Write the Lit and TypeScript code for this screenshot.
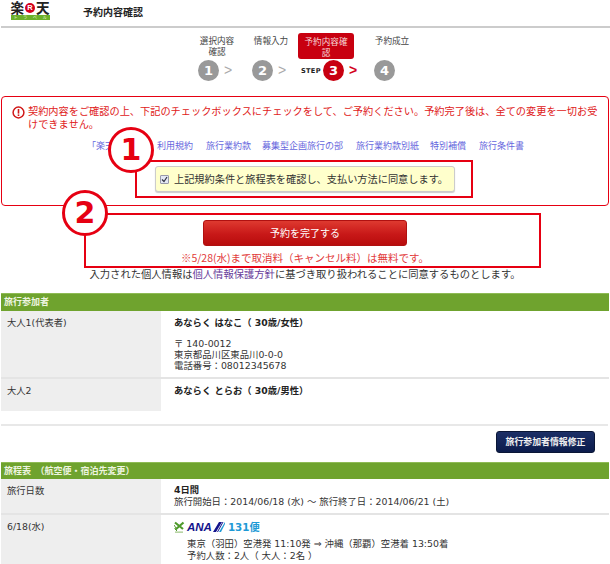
import { LitElement, html, css } from "lit";
import { customElement } from "lit/decorators.js";

@customElement("app-root")
export class AppRoot extends LitElement {
  static styles = css`
    :host { display: block; width: 610px; height: 564px; overflow: hidden; position: relative; background: #fff;
      font-family: "DejaVu Sans", "Noto Sans CJK JP", sans-serif; font-size: 9.5px; color: #333; }
    * { box-sizing: border-box; }
    .header { height: 28px; margin-left: 1px; border-bottom: 2px solid #ccc; display: flex; align-items: flex-start; padding-left: 9px; }
    .logo { width: 40px; display: flex; flex-direction: column; align-items: center; }
    .logo-top { height: 15px; display: flex; align-items: center; gap: 1px; font-family: "Noto Sans CJK JP", sans-serif; font-size: 13.5px; font-weight: 700; color: #222; line-height: 15px; white-space: nowrap; }
    .logo-r { width: 10px; height: 10px; border-radius: 50%; background: #d3001c; color: #fff; font: 700 7.5px/10px "Liberation Sans", sans-serif; text-align: center; }
    .logo-bar { width: 39px; height: 5px; background: #6cb02a; color: #e8f6d8; font-size: 4px; line-height: 5px; display: flex; justify-content: space-around; overflow: hidden; }
    .title { margin-left: 33px; margin-top: 5px; font: 700 10px/14px "Noto Sans CJK JP", sans-serif; color: #222; }

    .steps { height: 68px; position: relative; font-family: "Noto Sans CJK JP", sans-serif; }
    .lab { position: absolute; text-align: center; font-size: 8.6px; line-height: 10.5px; color: #444; width: 56px; }
    .lab.on { background: #c80010; color: #f6d6d6; border-radius: 3px; height: 26px; padding-top: 3px; }
    .num { position: absolute; top: 32px; width: 21px; height: 21px; border-radius: 50%; background: #999; color: #fff;
      font: 700 13px/21px "DejaVu Sans", sans-serif; text-align: center; }
    .num.on { background: #c80010; }
    .gt { position: absolute; top: 34px; font: 400 14px/17px "Liberation Sans", sans-serif; color: #aaa; }
    .gt.on { color: #d3001c; font-weight: 700; }
    .stp { position: absolute; top: 38px; left: 301px; font: 700 6.6px/10px "DejaVu Sans", sans-serif; letter-spacing: .3px; color: #222; }

    .notice { margin: 0 1px; height: 110px; border: 1.5px solid #e60012; border-radius: 4px; padding: 8px 6px 0 10px; }
    .warn { display: flex; gap: 3px; color: #e02020; font: 400 10.2px/12.5px "Noto Sans CJK JP", sans-serif; }
    .warn svg { flex: none; width: 13px; height: 13px; margin-top: 1px; }
    .links { display: flex; gap: 13px; margin-top: 9px; margin-left: 75px; color: #6666dd; font: 400 9px/13px "Noto Sans CJK JP", sans-serif; white-space: nowrap; }
    .links .tight { margin-left: -2px; }
    .links .first { margin-right: -6px; }
    .agree-wrap { display: flex; margin-top: 14px; margin-left: 143px; }
    .agree { width: 300px; height: 26px; background: #ffffcc; border: 1px solid #ccc; border-radius: 3px; box-shadow: 0 1px 1px #ccc;
      display: flex; align-items: center; padding-left: 4px; gap: 5px; font: 400 10.2px/14px "Noto Sans CJK JP", sans-serif; color: #333; white-space: nowrap; }
    .cb { width: 9px; height: 9px; border: 1px solid #99a; border-radius: 1px; background: #e4e8f4; display: block; }
    .cb svg { display: block; width: 7px; height: 7px; }

    .action { display: flex; flex-direction: column; align-items: center; padding-top: 14px; }
    .complete { width: 204px; height: 26px; border: 1px solid #b01010; border-radius: 3px;
      background: linear-gradient(#de3a30, #c81818 55%, #b80c0c); color: #fff; font: 400 10px/24px "Noto Sans CJK JP", sans-serif; text-align: center; }
    .free { margin-top: 5px; color: #e23a3a; font: 400 10.5px/13px "Noto Sans CJK JP", sans-serif; white-space: nowrap; }
    .consent { margin-top: 3px; color: #333; font: 400 10.3px/14px "Noto Sans CJK JP", sans-serif; white-space: nowrap; }
    .consent span { color: #6a3d9a; }

    .bar { margin-left: 1px; margin-right: 1px; height: 18px; background: #6fa32e; border-top: 1px solid #8fbb55; color: #eef5e0;
      font: 700 9px/16px "Noto Sans CJK JP", sans-serif; padding-left: 3px; white-space: pre; }
    .bar.b1 { margin-top: 12px; }
    .row { display: grid; grid-template-columns: 160px 1fr; margin-left: 1px; margin-right: 1px; }
    .row.sep { border-bottom: 2px solid #e4e4e4; }
    .k { background: #eee; padding: 5px 0 0 6px; font-size: 9.3px; line-height: 13px; color: #333; }
    .v { padding: 5px 0 0 13px; line-height: 12px; font-size: 9.4px; color: #333; }
    .v.tight { padding-top: 4px; }
    .name { font-weight: 700; font-size: 9.3px; line-height: 13px; color: #222; }
    .addr { margin-top: 9px; line-height: 11px; }
    .r1 { height: 68px; } .r2 { height: 32px; } .r3 { height: 36px; } .r4 { height: 60px; }
    .divider { margin: 13px 2px 0 1px; height: 2px; background: #e8e8e8; }
    .btn-row { display: flex; justify-content: flex-end; padding: 5px 15px 0 0; }
    .edit { width: 99px; height: 22px; background: linear-gradient(#1c2f66, #0c1c4c); border: 1px solid #0a1636; border-radius: 3px; color: #f0f0f0;
      font: 700 8.9px/20px "Noto Sans CJK JP", sans-serif; text-align: center; white-space: nowrap; }
    .bar.b2 { margin-top: 9px; height: 17px; }

    .flight { display: flex; align-items: center; height: 14px; }
    .plane { width: 11px; height: 12px; margin-right: 2px; }
    .ana { font: italic 700 11.5px/12px "Liberation Sans", sans-serif; color: #14148c; }
    .tail { width: 13px; height: 10px; margin-right: 3px; }
    .fno { color: #1e9ad6; font: 700 10.3px/14px "DejaVu Sans", "Noto Sans CJK JP", sans-serif; }
    .fd { margin: 4px 0 0 13px; line-height: 12px; white-space: nowrap; }

    .mark { position: absolute; border: 2px solid #e60012; pointer-events: none; }
    .m1 { left: 135px; top: 160px; width: 338px; height: 38px; }
    .m2 { left: 84px; top: 213px; width: 457px; height: 55px; }
    .circle { position: absolute; width: 46px; height: 46px; border: 3px solid #e60012; border-radius: 50%; background: #fff; color: #e60012;
      font: 700 30px/39px "DejaVu Sans", sans-serif; text-align: center; }
    .c1 { left: 108px; top: 127px; }
    .c2 { left: 62px; top: 190px; }
  `;

  render() {
    return html`
      <div class="header">
        <div class="logo">
          <div class="logo-top">楽<span class="logo-r">R</span>天</div>
          <div class="logo-bar"><span>ト</span><span>ラ</span><span>ベ</span><span>ル</span></div>
        </div>
        <div class="title">予約内容確認</div>
      </div>
      <div class="steps">
        <div class="lab" style="left:189px;top:7px">選択内容<br />確認</div>
        <div class="lab" style="left:243px;top:7px">情報入力</div>
        <div class="lab on" style="left:298px;top:5px">予約内容確<br />認</div>
        <div class="lab" style="left:364px;top:7px">予約成立</div>
        <div class="num" style="left:198px">1</div>
        <div class="gt" style="left:224px">&gt;</div>
        <div class="num" style="left:252px">2</div>
        <div class="gt" style="left:278px">&gt;</div>
        <div class="stp">STEP</div>
        <div class="num on" style="left:323px">3</div>
        <div class="gt on" style="left:349px">&gt;</div>
        <div class="num" style="left:374px">4</div>
      </div>

      <div class="notice">
        <div class="warn">
          <svg viewBox="0 0 13 13"><circle cx="6.5" cy="6.5" r="5.4" fill="none" stroke="#d01818" stroke-width="1.5" /><rect x="5.7" y="3" width="1.6" height="4.6" fill="#d01818" /><rect x="5.7" y="8.4" width="1.6" height="1.6" fill="#d01818" /></svg>
          <div>契約内容をご確認の上、下記のチェックボックスにチェックをして、ご予約ください。予約完了後は、全ての変更を一切お受けできません。</div>
        </div>
        <div class="links">
          <span class="first">「楽天トラベル</span><span>利用規約</span><span>旅行業約款</span><span class="tight">募集型企画旅行の部</span><span>旅行業約款別紙</span><span class="tight">特別補償</span><span>旅行条件書</span>
        </div>
        <div class="agree-wrap">
          <div class="agree">
            <span class="cb"><svg viewBox="0 0 7 7"><path d="M1 3.5 L3 5.5 L6 1" fill="none" stroke="#334" stroke-width="1.2" /></svg></span>
            上記規約条件と旅程表を確認し、支払い方法に同意します。
          </div>
        </div>
      </div>

      <div class="action">
        <div class="complete">予約を完了する</div>
        <div class="free">※5/28(水)まで取消料（キャンセル料）は無料です。</div>
        <div class="consent">入力された個人情報は<span>個人情報保護方針</span>に基づき取り扱われることに同意するものとします。</div>
      </div>

      <div class="bar b1">旅行参加者</div>
      <div class="row r1 sep">
        <div class="k">大人1(代表者)</div>
        <div class="v">
          <div class="name">あならく はなこ（ 30歳/女性）</div>
          <div class="addr">〒 140-0012<br />東京都品川区東品川0-0-0<br />電話番号：08012345678</div>
        </div>
      </div>
      <div class="row r2">
        <div class="k">大人2</div>
        <div class="v"><div class="name">あならく とらお（ 30歳/男性）</div></div>
      </div>
      <div class="divider"></div>
      <div class="btn-row"><div class="edit">旅行参加者情報修正</div></div>

      <div class="bar b2">旅程表　（航空便・宿泊先変更）</div>
      <div class="row r3 sep">
        <div class="k">旅行日数</div>
        <div class="v tight"><div class="name">4日間</div>旅行開始日：2014/06/18 (水) ～ 旅行終了日：2014/06/21 (土)</div>
      </div>
      <div class="row r4">
        <div class="k">6/18(水)</div>
        <div class="v">
          <div class="flight">
            <svg class="plane" viewBox="0 0 11 12">
              <path d="M1 1.5 L9 8 M1.5 8.5 L9.5 1.5" fill="none" stroke="#4f9a2c" stroke-width="2.2" />
              <path d="M0 4 L2 7 M3 10 L0.5 7.5" fill="none" stroke="#4f9a2c" stroke-width="1" />
              <rect x="1" y="10.6" width="8" height="1" fill="#8ab86a" />
            </svg>
            <span class="ana">ANA</span>
            <svg class="tail" viewBox="0 0 13 10"><path d="M1 10 L7 0 L10 0 L4 10 Z M5 10 L10.5 0 L11.5 0 L6 10 Z" fill="#14148c" /><path d="M7 10 L13 0 L13 2 L9 10 Z" fill="#1e9ad6" /></svg>
            <span class="fno">131便</span>
          </div>
          <div class="fd">東京（羽田）空港発 11:10発 ⇒ 沖縄（那覇）空港着 13:50着<br />予約人数：2人（ 大人：2名 ）</div>
        </div>
      </div>

      <div class="mark m1"></div>
      <div class="mark m2"></div>
      <div class="circle c1">1</div>
      <div class="circle c2">2</div>
    `;
  }
}
